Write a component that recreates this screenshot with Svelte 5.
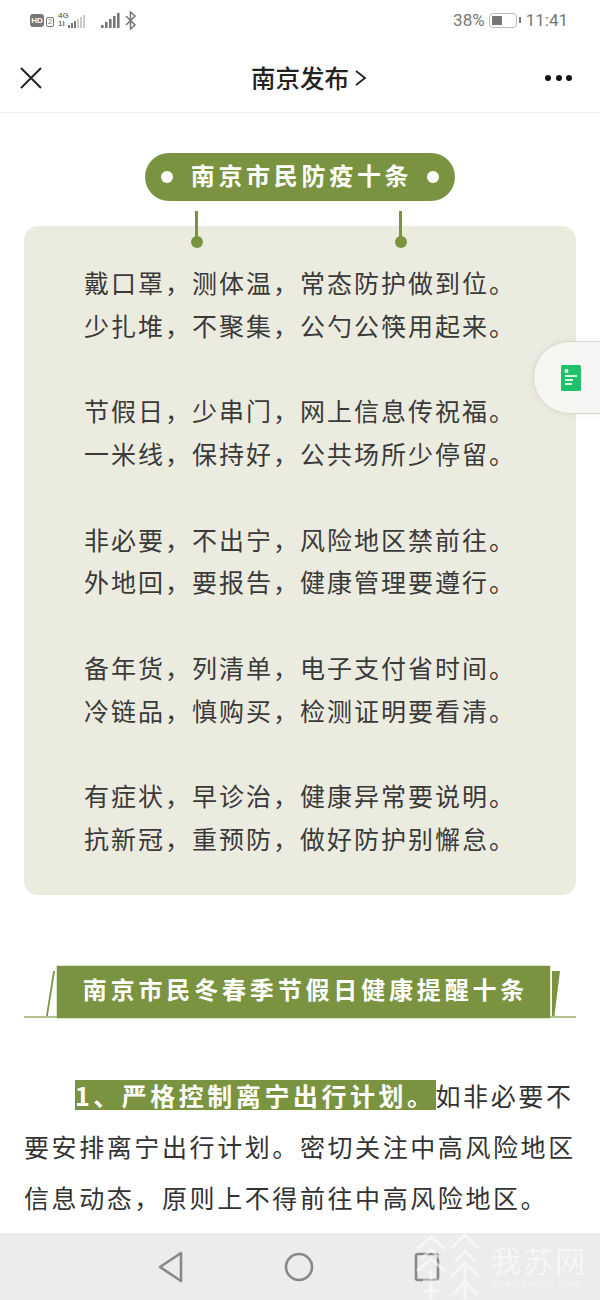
<script>
	const stanzas = [
		['戴口罩，测体温，常态防护做到位。', '少扎堆，不聚集，公勺公筷用起来。'],
		['节假日，少串门，网上信息传祝福。', '一米线，保持好，公共场所少停留。'],
		['非必要，不出宁，风险地区禁前往。', '外地回，要报告，健康管理要遵行。'],
		['备年货，列清单，电子支付省时间。', '冷链品，慎购买，检测证明要看清。'],
		['有症状，早诊治，健康异常要说明。', '抗新冠，重预防，做好防护别懈怠。']
	]
	const weak = [3, 5, 7, 9, 11, 13]
	const strong = [3, 6, 9, 12, 15]
</script>

<div class="page">
	<div class="status">
		<div class="status-left">
			<span class="hd">HD</span>
			<span class="sim">2</span>
			<span class="net"><span>4G</span><span>1l</span></span>
			<svg class="bars" width="18" height="18" viewBox="0 0 18 18">
				{#each weak as h, i}
					<rect x={i * 3} y={17 - h} width="2" height={h} fill={i < 3 ? '#777' : '#ccc'} />
				{/each}
			</svg>
			<svg class="bars second" width="20" height="18" viewBox="0 0 20 18">
				{#each strong as h, i}
					<rect x={i * 4} y={17 - h} width="2.6" height={h} fill="#777" />
				{/each}
			</svg>
			<svg width="12" height="19" viewBox="0 0 12 19" fill="none" stroke="#777" stroke-width="1.5">
				<path d="M1 5l9 9-4.500 4V1l4.500 4-9 9" />
			</svg>
		</div>
		<div class="status-right">
			<span>38%</span>
			<span class="battery"><i></i></span>
			<span class="battery-tip"></span>
			<span>11:41</span>
		</div>
	</div>

	<nav>
		<svg width="24" height="24" viewBox="0 0 24 24" stroke="#222" stroke-width="2" fill="none">
			<path d="M2 2l20 20M22 2L2 22" />
		</svg>
		<div class="title">
			南京发布
			<svg width="13" height="18" viewBox="0 0 13 18" stroke="#222" stroke-width="1.800" fill="none">
				<path d="M2 2l9 7-9 7" />
			</svg>
		</div>
		<div class="more"><i></i><i></i><i></i></div>
	</nav>

	<main>
		<div class="pill">
			<i></i>
			<span>南京市民防疫十条</span>
			<i></i>
		</div>

		<section class="card">
			<div class="hanger left"></div>
			<div class="hanger right"></div>
			{#each stanzas as stanza}
				<div class="stanza">
					{#each stanza as line}
						<p>{line}</p>
					{/each}
				</div>
			{/each}
		</section>

		<div class="banner">
			<div class="wing wing-left"></div>
			<h2>南京市民冬春季节假日健康提醒十条</h2>
			<div class="wing wing-right"></div>
		</div>

		<p class="para">
			<span class="mark">1、严格控制离宁出行计划。</span>如非必要不要安排离宁出行计划。密切关注中高风险地区信息动态，原则上不得前往中高风险地区。
		</p>
	</main>

	<footer>
		<svg width="26" height="32" viewBox="0 0 26 32" fill="none" stroke="#888" stroke-width="2.600" stroke-linejoin="round">
			<path d="M23 2v28L2 16z" />
		</svg>
		<svg width="30" height="30" viewBox="0 0 30 30" fill="none" stroke="#888" stroke-width="2.600">
			<circle cx="15" cy="15" r="13" />
		</svg>
		<svg width="26" height="30" viewBox="0 0 26 30" fill="none" stroke="#888" stroke-width="2.600">
			<rect x="2" y="2" width="22" height="26" rx="2" />
		</svg>
		<div class="watermark">
			<svg width="66" height="66" viewBox="0 0 66 66" fill="none" stroke="#fff" stroke-width="3">
				<path d="M2 16L16 4l14 12M6 26l10-9 10 9M2 38l14-12 14 12M8 48h16M8 58h16M16 38v28" />
				<path d="M36 16L50 2l14 14M40 28l10-10 10 10M36 44l14-14 14 14M50 30v36M38 62l12-14 12 14" />
			</svg>
			<div class="wm-text">
				<span>我苏网</span>
				<small>OURJIANGSU.COM</small>
			</div>
		</div>
	</footer>

	<div class="bubble">
		<svg width="20" height="26" viewBox="0 0 20 26">
			<rect width="20" height="26" rx="1.500" fill="#1fc16b" />
			<circle cx="5.500" cy="6" r="2" fill="#d9f7e6" />
			<path d="M4 11h12M4 15h8M4 19h7" stroke="#d9f7e6" stroke-width="1.800" />
		</svg>
	</div>
</div>

<style>
	:global(body) {
		background: #fff;
	}

	.page {
		position: relative;
		width: 600px;
		height: 1300px;
		display: flex;
		flex-direction: column;
		overflow: hidden;
		font-family: 'Noto Sans CJK SC', 'Noto Sans', sans-serif;
	}

	.status {
		height: 40px;
		flex: none;
		display: flex;
		justify-content: space-between;
		align-items: center;
		padding: 0 32px 0 30px;
		color: #777;
	}

	.status-left {
		display: flex;
		align-items: center;
	}

	.hd {
		width: 14px;
		height: 13px;
		background: #777;
		border-radius: 3px;
		color: #fff;
		font: bold 8px/13px 'Liberation Sans', sans-serif;
		text-align: center;
	}

	.sim {
		width: 6px;
		height: 8px;
		margin: 3px 0 0 2px;
		border: 1px solid #777;
		border-radius: 2px;
		font: 7px/8px 'Liberation Sans', sans-serif;
		text-align: center;
	}

	.net {
		width: 10px;
		display: flex;
		flex-direction: column;
		margin-left: 4px;
		font: bold 8px/8px 'Liberation Sans', sans-serif;
	}

	.bars.second {
		margin: 0 4px 0 15px;
	}

	.status-right {
		display: flex;
		align-items: center;
		font: 17px/20px Roboto, sans-serif;
	}

	.battery {
		width: 28px;
		height: 15px;
		box-sizing: border-box;
		margin-left: 4px;
		padding: 2px;
		border: 1.500px solid #bbb;
		border-radius: 4px;
	}

	.battery i {
		display: block;
		width: 10px;
		height: 100%;
		background: #777;
	}

	.battery-tip {
		width: 2px;
		height: 6px;
		margin: 0 5px 0 2px;
		background: #777;
	}

	nav {
		height: 73px;
		flex: none;
		box-sizing: border-box;
		display: flex;
		align-items: center;
		justify-content: space-between;
		padding: 4px 28px 0 19px;
		border-bottom: 1px solid #f1f1f1;
	}

	.title {
		display: flex;
		align-items: center;
		gap: 5px;
		color: #222;
		font-size: 24.500px;
		font-weight: 500;
		line-height: 32px;
		margin-left: 30px;
	}

	.more {
		display: flex;
		gap: 4.500px;
	}

	.more i {
		width: 6px;
		height: 6px;
		border-radius: 50%;
		background: #111;
	}

	main {
		flex: 1;
		min-height: 0;
		padding: 40px 24px 0;
	}

	.pill {
		width: 310px;
		height: 48px;
		box-sizing: border-box;
		margin: 0 auto;
		padding: 0 16px;
		display: flex;
		align-items: center;
		justify-content: space-between;
		border-radius: 24px;
		background: #7a9340;
		color: #fff;
		font-size: 24px;
		font-weight: 700;
		letter-spacing: 3.700px;
	}

	.pill i {
		width: 12px;
		height: 12px;
		border-radius: 50%;
		background: #fff;
	}

	.pill span {
		margin: -5px -3px 0 0;
	}

	.card {
		position: relative;
		height: 669px;
		box-sizing: border-box;
		margin-top: 25px;
		padding: 35px 0 0 60px;
		border-radius: 14px;
		background: #ecebe0;
		color: #3a3a3a;
		font-size: 25px;
		line-height: 42.750px;
		letter-spacing: 2px;
	}

	.hanger {
		position: absolute;
		top: -15px;
		width: 3px;
		height: 32px;
		background: #7a9340;
	}

	.hanger::after {
		content: '';
		position: absolute;
		top: 25px;
		left: -4.500px;
		width: 12px;
		height: 12px;
		border-radius: 50%;
		background: #7a9340;
	}

	.hanger.left {
		left: 171px;
	}

	.hanger.right {
		left: 375px;
	}

	.stanza {
		margin-bottom: 42.750px;
	}

	.stanza p {
		margin: 0;
		white-space: nowrap;
	}

	.banner {
		display: flex;
		align-items: stretch;
		height: 52px;
		margin-top: 71px;
	}

	h2 {
		flex: none;
		width: 493px;
		box-sizing: border-box;
		margin: 0;
		padding-left: 4px;
		background: #7a9340;
		color: #fff;
		font-size: 24px;
		font-weight: 700;
		line-height: 46px;
		letter-spacing: 3.830px;
		text-align: center;
		box-shadow: 0 0 0 1px #dfe5ce;
	}

	.wing {
		position: relative;
		box-sizing: border-box;
		border-bottom: 2px solid #b4c08f;
		height: 51px;
		margin-top: 1px;
	}

	.wing-left {
		width: 33px;
	}

	.wing-right {
		width: 26px;
	}

	.wing::after {
		content: '';
		position: absolute;
		top: 4px;
		bottom: 0;
		width: 8px;
		background: #7a9340;
	}

	.wing-left::after {
		right: 2px;
		clip-path: polygon(100% 0, 80% 0, 0 100%, 20% 100%);
		width: 9px;
	}

	.wing-right::after {
		left: 2px;
		clip-path: polygon(0 0, 100% 0, 30% 100%, 0 100%);
	}

	.para {
		margin: 52px 0 0;
		color: #333;
		font-size: 25px;
		line-height: 51px;
		letter-spacing: 2.590px;
		text-indent: 51px;
	}

	.mark {
		display: inline-block;
		height: 30px;
		line-height: 30px;
		text-indent: 0;
		letter-spacing: 3.520px;
		background: #7a9340;
		color: #fff;
		font-weight: 700;
	}

	footer {
		position: relative;
		flex: none;
		height: 67px;
		display: flex;
		align-items: center;
		padding-left: 158px;
		gap: 100px;
		background: #ececec;
	}

	.watermark {
		position: absolute;
		left: 415px;
		top: 0;
		display: flex;
		align-items: center;
		gap: 10px;
		color: #fff;
		opacity: 0.55;
	}

	.wm-text {
		display: flex;
		flex-direction: column;
		gap: 6px;
	}

	.wm-text span {
		font-size: 30px;
		line-height: 30px;
		letter-spacing: 2px;
	}

	.wm-text small {
		font: 8px/9px 'Liberation Sans', sans-serif;
		letter-spacing: 1.200px;
	}

	.bubble {
		position: absolute;
		left: 533px;
		top: 341px;
		width: 100px;
		height: 73px;
		box-sizing: border-box;
		padding: 23px 0 0 27px;
		border: 1px solid #d9d7cc;
		border-radius: 37px 0 0 37px;
		background: rgba(246, 246, 244, 0.96);
		box-shadow: 0 0 8px rgba(0, 0, 0, 0.06);
	}
</style>
